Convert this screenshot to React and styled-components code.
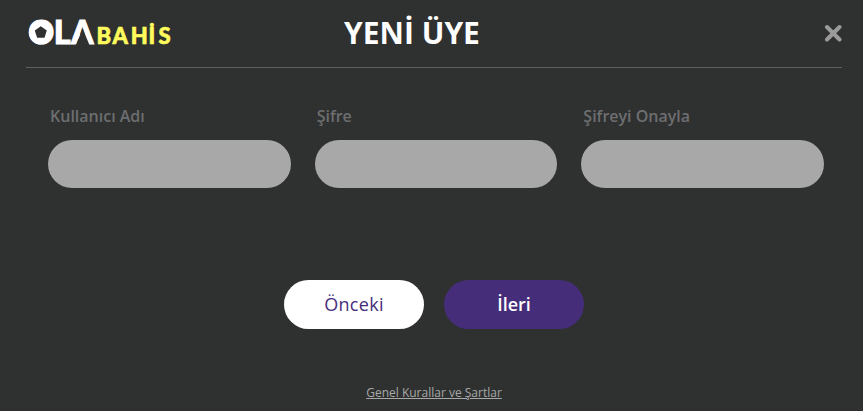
import React from "react";
import styled, { createGlobalStyle } from "styled-components";

const fields = ["Kullanıcı Adı", "Şifre", "Şifreyi Onayla"];

function Logo() {
  return (
    <svg width="150" height="50" viewBox="0 0 150 50" fontFamily="Lato, sans-serif" fontWeight="900">
      <text x="0.4 26 43.2" y="35.5" fontSize="31.5" fill="#fff" stroke="#fff" strokeWidth="1.2">OLA</text>
      <circle cx="12.8" cy="24.4" r="12" fill="#fff" />
      <path d="M12.8 18.2l6 4.4-2.3 7.1h-7.4l-2.3-7.1z" fill="#2f3130" />
      <path d="M48 37l6.7-16.5 6.7 16.5z" fill="#2f3130" />
      <text x="68.4 84.6 102.8 120.4 130.6" y="35.5" fontSize="22" fill="#fffb5c" stroke="#fffb5c" strokeWidth="0.6">BAHİS</text>
    </svg>
  );
}

export default function App() {
  return (
    <Modal>
      <GlobalStyle />
      <Header>
        <Logo />
        <Title>YENİ ÜYE</Title>
        <Close aria-label="Kapat">
          <svg width="18" height="18" viewBox="0 0 18 18">
            <path d="M3 3l12.5 12.5M15.5 3l-12.5 12.5" stroke="#9b9b9b" strokeWidth="4" strokeLinecap="round" />
          </svg>
        </Close>
      </Header>
      <Form>
        {fields.map((name) => (
          <Field key={name}>
            <span>{name}</span>
            <input />
          </Field>
        ))}
      </Form>
      <Actions>
        <Button>Önceki</Button>
        <Button $primary>İleri</Button>
      </Actions>
      <Terms href="#">Genel Kurallar ve Şartlar</Terms>
    </Modal>
  );
}

const GlobalStyle = createGlobalStyle`
  * {
    box-sizing: border-box;
  }
  body {
    margin: 0;
    background: #2f3130;
    font-family: "Open Sans", sans-serif;
  }
`;

const Modal = styled.div`
  display: flex;
  flex-direction: column;
  height: 411px;
  padding: 0 21px 0 26px;
  background: #2f3130;
`;

const Header = styled.header`
  display: grid;
  grid-template-columns: 150px 1fr 150px;
  align-items: center;
  height: 68px;
  padding: 0 0 1px 2px;
  border-bottom: 1px solid #5e5f5e;
`;

const Title = styled.h1`
  margin: 0;
  text-align: center;
  color: #fff;
  font-size: 30px;
  font-weight: 700;
  line-height: 40px;
  padding-right: 46px;
`;

const Close = styled.button`
  display: flex;
  justify-self: end;
  padding: 0;
  border: 0;
  background: none;
`;

const Form = styled.form`
  display: grid;
  grid-template-columns: repeat(3, 1fr);
  gap: 24px;
  padding: 36px 18px 0 22px;
`;

const Field = styled.label`
  display: flex;
  flex-direction: column;
  gap: 12px;
  span {
    padding-left: 2px;
    color: #6d6e70;
    font-size: 16px;
    font-weight: 600;
    line-height: 24px;
  }
  input {
    width: 100%;
    height: 48px;
    padding: 0 24px;
    border: 0;
    border-radius: 24px;
    background: #a8a8a8;
  }
`;

const Actions = styled.div`
  display: flex;
  gap: 20px;
  margin: 92px 0 0 258px;
`;

const Button = styled.button`
  width: 140px;
  height: 49px;
  padding: 0 0 1px;
  border: 0;
  border-radius: 25px;
  background: ${(props) => (props.$primary ? "#452d7a" : "#fff")};
  color: ${(props) => (props.$primary ? "#fff" : "#452d7a")};
  font-family: inherit;
  font-size: 18px;
  font-weight: ${(props) => (props.$primary ? 600 : 500)};
  letter-spacing: ${(props) => (props.$primary ? "0" : "0.3px")};
`;

const Terms = styled.a`
  align-self: center;
  margin-top: 54px;
  color: #a8a8a8;
  font-size: 12px;
  line-height: 20px;
`;
